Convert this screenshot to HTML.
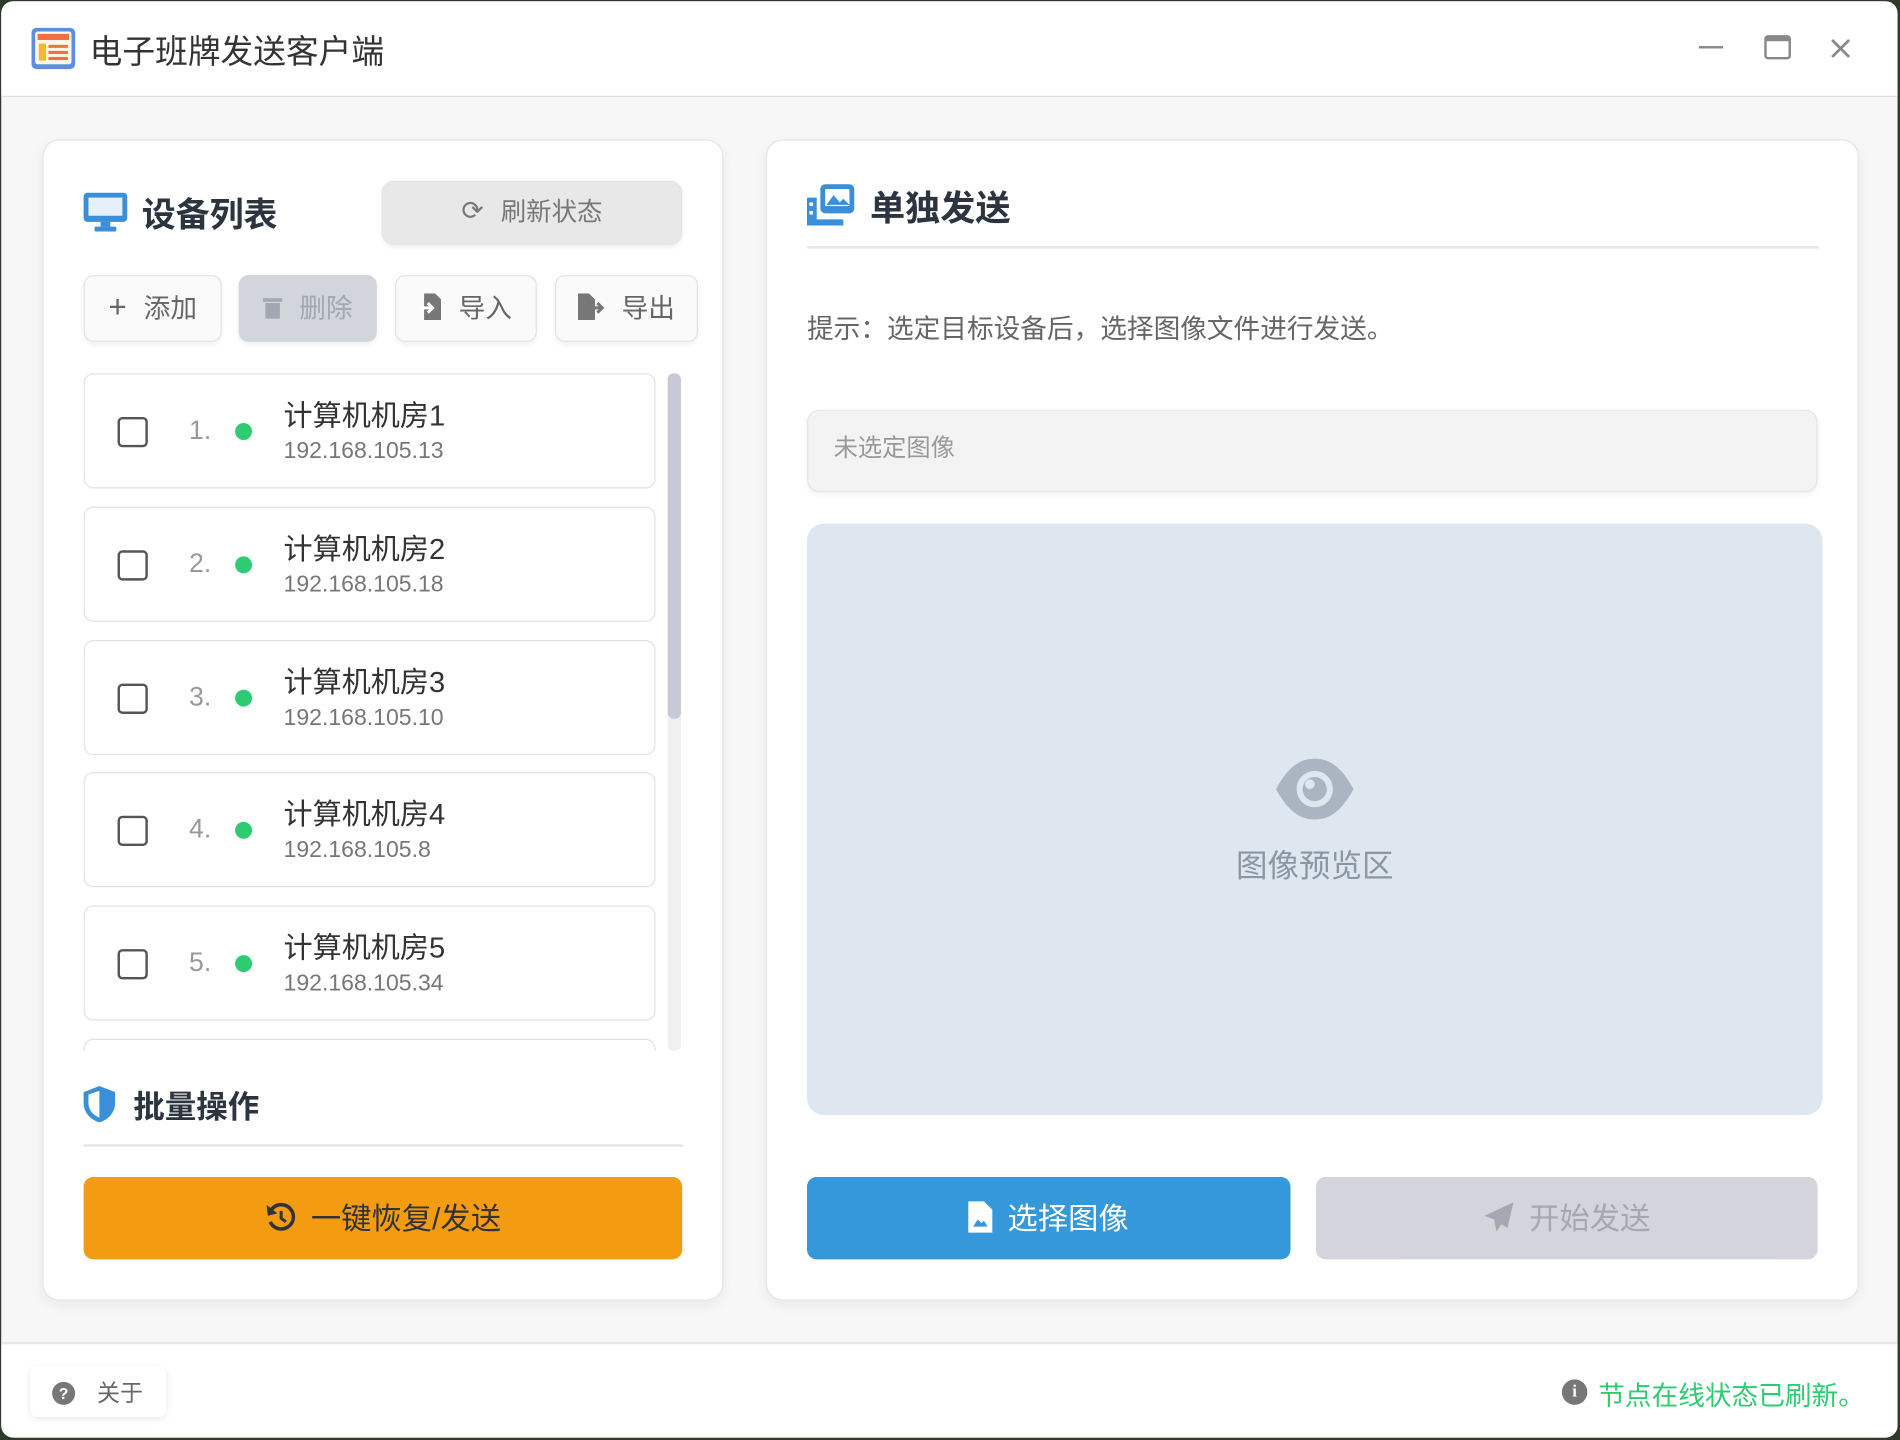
<!DOCTYPE html>
<html><head><meta charset="utf-8"><style>
*{box-sizing:border-box;margin:0;padding:0}
html,body{width:1900px;height:1440px;overflow:hidden;background:#2f3a2c}
#s{position:absolute;left:0;top:0;width:1568px;height:1188px;transform:scale(1.21173,1.21212);transform-origin:0 0;font-family:"Liberation Sans","Noto Sans CJK SC",sans-serif}
.a{position:absolute}
.win{left:1px;top:1px;width:1565px;height:1185px;background:#f7f7f7;border-radius:10px;overflow:hidden}
.card{background:#fff;border:1px solid #e6e6e6;border-radius:14px;box-shadow:0 4px 10px rgba(0,0,0,.06)}
.btn{border:1px solid #e3e3e3;border-radius:8px;background:#fafafa;box-shadow:0 2px 4px rgba(0,0,0,.06);color:#666;font-size:22px;display:flex;align-items:center;justify-content:center;gap:14px;padding-bottom:3px}
.item{left:68px;width:472px;height:95px;border:1px solid #e2e2e2;border-radius:8px;background:#fff}
.cb{left:27px;top:35px;width:25px;height:25px;border:2px solid #555;border-radius:4px}
.num{left:86px;top:33px;font-size:22px;color:#999}
.dot{left:124px;top:40px;width:14px;height:14px;border-radius:50%;background:#2ecc71}
.nm{left:164px;top:14px;font-size:24px;color:#333}
.ip{left:164px;top:53px;font-size:19px;color:#777}
.big{display:flex;align-items:center;justify-content:center;gap:12px;font-size:25px;border-radius:8px;padding-bottom:2px}
</style></head><body><div id="s">
<div class="a win">
 <div class="a" style="left:0;top:0;width:1565px;height:79px;background:#fff;border-bottom:1px solid #e0e0e0"></div>
 <svg class="a" style="left:24px;top:21px" width="38" height="38" viewBox="0 0 38 38"><rect x="1" y="1" width="36" height="34" rx="4" fill="#5b8fe0"/><rect x="4" y="4" width="30" height="27" rx="2" fill="#fff7e6"/><rect x="6" y="6" width="26" height="5" fill="#f07040"/><rect x="7" y="14" width="6" height="14" fill="#f5b82e"/><rect x="15" y="15" width="16" height="2.5" fill="#f07040"/><rect x="15" y="20" width="16" height="2.5" fill="#f07040"/><rect x="15" y="25" width="16" height="2.5" fill="#f07040"/></svg>
 <div class="a" style="left:73px;top:20px;font-size:27px;color:#333">电子班牌发送客户端</div>
 <div class="a" style="left:1401px;top:37px;width:20px;height:2px;background:#888"></div>
 <div class="a" style="left:1455px;top:28px;width:22px;height:20px;border:2px solid #888;border-top-width:5px;border-radius:3px"></div>
 <svg class="a" style="left:1509px;top:30px" width="18" height="18"><path d="M2 2L16 16M16 2L2 16" stroke="#888" stroke-width="2.2"/></svg>

 <div class="a card" style="left:34px;top:114px;width:562px;height:958px"></div>
 <svg class="a" style="left:67px;top:157px" width="38" height="34" viewBox="0 0 38 34"><rect x="1" y="1" width="36" height="24" rx="3" fill="#3a8fd8"/><rect x="5" y="5" width="28" height="15" fill="#e6f0fb"/><rect x="15" y="25" width="8" height="4" fill="#3a8fd8"/><rect x="10" y="29" width="18" height="4" rx="1" fill="#3a8fd8"/></svg>
 <div class="a" style="left:116px;top:155px;font-size:28px;font-weight:bold;color:#2c3440">设备列表</div>
 <div class="a btn" style="left:314px;top:148px;width:248px;height:53px;background:#e8e8e8;border-color:#e4e4e4;color:#777;font-size:21px;border-radius:10px"><span style="font-size:22px">⟳</span><span>刷新状态</span></div>
 <div class="a btn" style="left:68px;top:226px;width:114px;height:55px"><span style="font-size:26px">+</span>添加</div>
 <div class="a btn" style="left:196px;top:226px;width:114px;height:55px;background:#d3d5dd;border-color:#d3d5dd;color:#a3a7b2"><svg width="16" height="19"><rect x="0" y="2" width="16" height="3" fill="#a3a7b2"/><rect x="2" y="6" width="12" height="13" fill="#a3a7b2"/></svg>删除</div>
 <div class="a btn" style="left:325px;top:226px;width:117px;height:55px"><svg width="18" height="22"><path d="M4 0h9l5 5v17H4z" fill="#777"/><path d="M0 12h10M7 8l4 4-4 4" stroke="#fff" stroke-width="2.5" fill="none"/></svg>导入</div>
 <div class="a btn" style="left:457px;top:226px;width:118px;height:55px"><svg width="22" height="22"><path d="M0 0h9l5 5v17H0z" fill="#777"/><path d="M8 12h12M16 8l4 4-4 4" stroke="#777" stroke-width="2.5" fill="none"/></svg>导出</div>

 <div class="a" style="left:0;top:300px;width:600px;height:566px;overflow:hidden">
  <div class="a item" style="top:7px"><div class="a cb"></div><div class="a num">1.</div><div class="a dot"></div><div class="a nm">计算机机房1</div><div class="a ip">192.168.105.13</div></div>
  <div class="a item" style="top:117px"><div class="a cb"></div><div class="a num">2.</div><div class="a dot"></div><div class="a nm">计算机机房2</div><div class="a ip">192.168.105.18</div></div>
  <div class="a item" style="top:227px"><div class="a cb"></div><div class="a num">3.</div><div class="a dot"></div><div class="a nm">计算机机房3</div><div class="a ip">192.168.105.10</div></div>
  <div class="a item" style="top:336px"><div class="a cb"></div><div class="a num">4.</div><div class="a dot"></div><div class="a nm">计算机机房4</div><div class="a ip">192.168.105.8</div></div>
  <div class="a item" style="top:446px"><div class="a cb"></div><div class="a num">5.</div><div class="a dot"></div><div class="a nm">计算机机房5</div><div class="a ip">192.168.105.34</div></div>
  <div class="a item" style="top:556px"></div>
  <div class="a" style="left:550px;top:7px;width:11px;height:559px;background:#f0f0f0;border-radius:5px"></div>
  <div class="a" style="left:550px;top:7px;width:11px;height:285px;background:#c8c9d6;border-radius:5px"></div>
 </div>

 <svg class="a" style="left:67px;top:894px" width="28" height="32" viewBox="0 0 28 32"><path d="M14 1L27 6v9c0 8-6 14-13 16C7 29 1 23 1 15V6z" fill="#3a8fd8"/><path d="M14 5v22c-5-2-9-6-9-12V8z" fill="#fff"/></svg>
 <div class="a" style="left:109px;top:892px;font-size:26px;font-weight:bold;color:#2c3440">批量操作</div>
 <div class="a" style="left:68px;top:943px;width:495px;height:2px;background:#e6e6e6"></div>
 <div class="a big" style="left:68px;top:970px;width:494px;height:68px;background:#f39c12;color:#333"><svg width="26" height="26" viewBox="0 0 26 26"><path d="M5 7A10 10 0 1 1 4 17" stroke="#333" stroke-width="3" fill="none"/><path d="M1 3l1 9 8-2z" fill="#333"/><path d="M13 8v6l4 3" stroke="#333" stroke-width="2.5" fill="none"/></svg>一键恢复/发送</div>

 <div class="a card" style="left:631px;top:114px;width:902px;height:958px"></div>
 <svg class="a" style="left:664px;top:150px" width="42" height="36" viewBox="0 0 42 36"><rect x="12" y="1" width="28" height="24" rx="4" fill="#3a8fd8"/><rect x="16" y="5" width="20" height="14" fill="#fff"/><path d="M17 18l6-8 5 6 3-3 5 5z" fill="#3a8fd8"/><path d="M1 12h8v18h22v5H1z" fill="#3a8fd8"/><rect x="3" y="16" width="3" height="3" fill="#fff"/><rect x="3" y="23" width="3" height="3" fill="#fff"/></svg>
 <div class="a" style="left:717px;top:148px;font-size:29px;font-weight:bold;color:#2c3440">单独发送</div>
 <div class="a" style="left:665px;top:202px;width:835px;height:2px;background:#e6e6e6"></div>
 <div class="a" style="left:665px;top:253px;font-size:22px;color:#666">提示：选定目标设备后，选择图像文件进行发送。</div>
 <div class="a" style="left:665px;top:337px;width:834px;height:68px;background:#f3f3f3;border:1px solid #e6e6e6;border-radius:10px;box-shadow:0 2px 4px rgba(0,0,0,.05)"></div>
 <div class="a" style="left:687px;top:352px;font-size:20px;color:#999">未选定图像</div>
 <div class="a" style="left:665px;top:431px;width:838px;height:488px;background:#dee6ef;border-radius:14px"></div>
 <svg class="a" style="left:1051px;top:624px" width="66" height="52" viewBox="0 0 66 52"><path d="M1 26C12 6 22 1 33 1s21 5 32 25C54 46 44 51 33 51S12 46 1 26z" fill="#aab5c1"/><circle cx="33" cy="26" r="15" fill="#dee6ef"/><circle cx="33" cy="26" r="10" fill="#aab5c1"/><circle cx="29" cy="22" r="4" fill="#dee6ef"/></svg>
 <div class="a" style="left:665px;top:693px;width:838px;text-align:center;font-size:26px;color:#8b96a3">图像预览区</div>
 <div class="a big" style="left:665px;top:970px;width:399px;height:68px;background:#3498db;color:#fff"><svg width="20" height="26" viewBox="0 0 20 26"><path d="M0 0h13l7 7v19H0z" fill="#fff"/><path d="M4 21l4-6 3 3 2-2 3 5z" fill="#3498db"/></svg>选择图像</div>
 <div class="a big" style="left:1085px;top:970px;width:414px;height:68px;background:#d3d4dc;color:#a4a8b2"><svg width="26" height="26" viewBox="0 0 26 26"><path d="M25 1L1 12l8 3 2 10 4-6 5 3z" fill="#a4a8b2"/></svg>开始发送</div>

 <div class="a" style="left:0;top:1106px;width:1565px;height:80px;background:#fff;border-top:2px solid #e6e6e6"></div>
 <div class="a" style="left:24px;top:1126px;width:112px;height:42px;background:#fff;border-radius:6px;box-shadow:0 2px 6px rgba(0,0,0,.08)"></div>
 <div class="a" style="left:42px;top:1139px;width:19px;height:19px;border-radius:50%;background:#777;color:#fff;font-size:13px;font-weight:bold;text-align:center;line-height:19px">?</div>
 <div class="a" style="left:79px;top:1134px;font-size:19px;color:#666">关于</div>
 <div class="a" style="left:1288px;top:1137px;width:21px;height:21px;border-radius:50%;background:#777;color:#fff;font-size:14px;font-weight:bold;text-align:center;line-height:21px;font-family:'Liberation Serif',serif">i</div>
 <div class="a" style="left:1318px;top:1133px;font-size:22px;color:#2ecc71">节点在线状态已刷新。</div>
</div>
</div></body></html>
